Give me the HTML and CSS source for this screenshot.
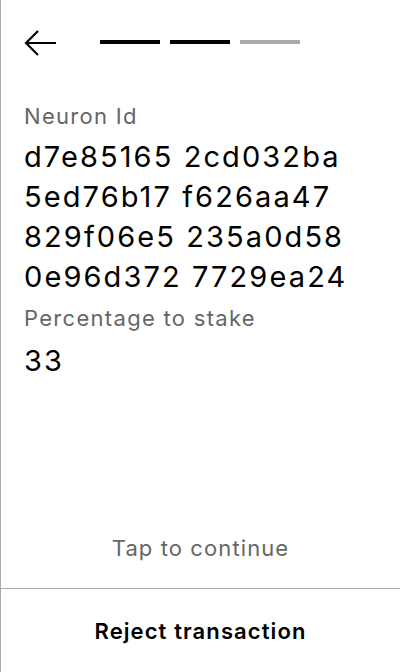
FILE: index.html
```html
<!DOCTYPE html>
<html>
<head>
<meta charset="utf-8">
<link rel="stylesheet" href="styles.css">
</head>
<body>
<div class="screen">
  <div class="header">
    <svg class="back" width="33" height="29" viewBox="0 0 33 29">
      <path d="M32 15H2M14 3L2 15L14 27" fill="none" stroke="#000" stroke-width="2.2"/>
    </svg>
    <div class="steps">
      <span class="step done"></span>
      <span class="step done"></span>
      <span class="step"></span>
    </div>
  </div>
  <div class="content">
    <div class="label">Neuron Id</div>
    <div class="value">d7e85165 2cd032ba 5ed76b17 f626aa47 829f06e5 235a0d58 0e96d372 7729ea24</div>
    <div class="label label-2">Percentage to stake</div>
    <div class="value value-2">33</div>
  </div>
  <div class="tap">Tap to continue</div>
  <div class="reject">Reject transaction</div>
</div>
</body>
</html>
```

FILE: styles.css
```css
html, body {
  margin: 0;
  padding: 0;
  background: #fff;
}
.screen {
  width: 399px;
  height: 672px;
  border-left: 1px solid #aaa;
  display: flex;
  flex-direction: column;
  font-family: Inter, "Noto Sans", sans-serif;
  color: #000;
}
.header {
  display: flex;
  align-items: center;
  padding: 28px 0 0 23px;
  height: 29px;
}
.back {
  display: block;
}
.steps {
  display: flex;
  gap: 10px;
  margin-left: 43px;
  margin-top: -2px;
}
.step {
  width: 60px;
  height: 4px;
  background: #aaa;
}
.step.done {
  background: #000;
}
.content {
  padding: 43px 23px 0 23px;
}
.label {
  font-size: 22px;
  line-height: 32px;
  letter-spacing: 1.3px;
  color: #666;
}
.label-2 {
  margin-top: 5px;
}
.value {
  font-size: 29px;
  line-height: 40px;
  letter-spacing: 2.1px;
  margin-top: 5px;
}
.value-2 {
  margin-top: 7px;
}
.tap {
  margin-top: auto;
  text-align: center;
  font-size: 22px;
  line-height: 32px;
  letter-spacing: 1.1px;
  color: #666;
  padding-bottom: 24px;
  border-bottom: 1px solid #aaa;
}
.reject {
  height: 83px;
  display: flex;
  align-items: center;
  justify-content: center;
  font-size: 22px;
  font-weight: 600;
  letter-spacing: 1.1px;
}
```
